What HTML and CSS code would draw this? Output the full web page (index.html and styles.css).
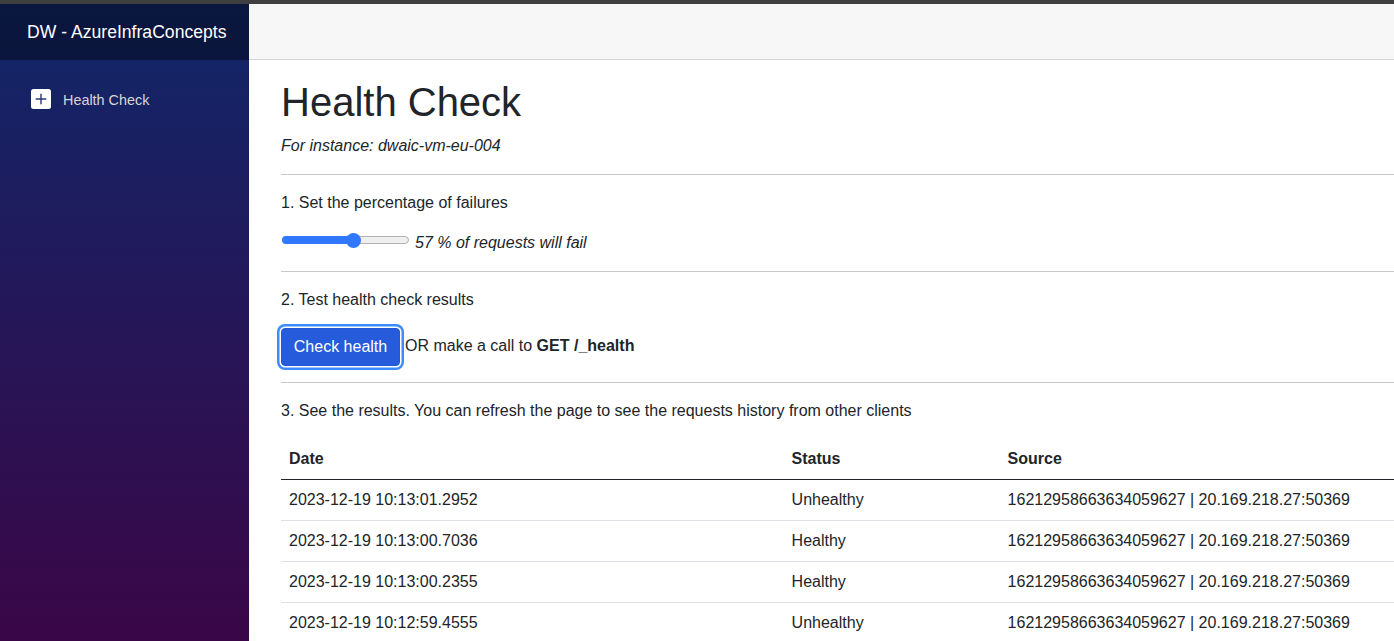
FILE: index.html
```
<!DOCTYPE html>
<html lang="en">
<head>
<meta charset="utf-8">
<title>Health Check</title>
<link rel="stylesheet" href="styles.css">
</head>
<body>
<div class="page">
  <aside class="sidebar">
    <div class="brand">DW - AzureInfraConcepts</div>
    <nav class="nav">
      <a class="nav-link"><svg class="nav-icon" viewBox="0 0 20 20"><rect width="20" height="20" rx="2.5" fill="#fff"/><path d="M10 5.2v9.6M5.2 10h9.6" stroke="#2b3676" stroke-width="1.4" stroke-linecap="round"/></svg>Health Check</a>
    </nav>
  </aside>
  <main class="main">
    <div class="top-row"></div>
    <article class="content">
      <h1>Health Check</h1>
      <p><em>For instance: dwaic-vm-eu-004</em></p>
      <hr>
      <p>1. Set the percentage of failures</p>
      <div class="range-row">
        <div class="range"><div class="range-fill"></div><div class="range-thumb"></div></div>
        <em>57 % of requests will fail</em>
      </div>
      <hr>
      <p>2. Test health check results</p>
      <div class="action-row"><button class="btn">Check health</button><span class="action-hint">OR make a call to <b>GET /_health</b></span></div>
      <hr>
      <p>3. See the results. You can refresh the page to see the requests history from other clients</p>
      <table class="table">
        <colgroup><col class="col-date"><col class="col-status"><col></colgroup>
        <thead><tr><th>Date</th><th>Status</th><th>Source</th></tr></thead>
        <tbody>
          <tr><td>2023-12-19 10:13:01.2952</td><td>Unhealthy</td><td>16212958663634059627 | 20.169.218.27:50369</td></tr>
          <tr><td>2023-12-19 10:13:00.7036</td><td>Healthy</td><td>16212958663634059627 | 20.169.218.27:50369</td></tr>
          <tr><td>2023-12-19 10:13:00.2355</td><td>Healthy</td><td>16212958663634059627 | 20.169.218.27:50369</td></tr>
          <tr><td>2023-12-19 10:12:59.4555</td><td>Unhealthy</td><td>16212958663634059627 | 20.169.218.27:50369</td></tr>
        </tbody>
      </table>
    </article>
  </main>
</div>
</body>
</html>
```
FILE: styles.css
```
* { box-sizing: border-box; }
body {
  margin: 0;
  height: 641px;
  overflow: hidden;
  font: 16px/24px "Liberation Sans", Arial, sans-serif;
  color: #212529;
  background: #fff;
  border-top: 4px solid #3f3f3f;
}
.page { display: flex; height: 637px; }
.sidebar {
  width: 249px;
  flex: none;
  background: linear-gradient(180deg, #102769 0%, #3a0647 100%);
}
.brand {
  height: 56px;
  padding-left: 27px;
  line-height: 56px;
  font-size: 17.6px;
  color: #fff;
  background: rgba(0, 0, 0, .4);
}
.nav { padding: 15px 16px; }
.nav-link {
  display: flex;
  align-items: center;
  height: 50px;
  padding-left: 15px;
  gap: 12px;
  font-size: 14.4px;
  color: #d7d7d7;
}
.nav-icon { width: 20px; height: 20px; margin-bottom: 2px; }
.main { flex: 1; min-width: 0; }
.top-row { height: 56px; background: #f7f7f7; border-bottom: 1px solid #d6d5d5; }
.content { padding: 18px 0 0 32px; }
h1 { margin: 0 0 8px; font-size: 40px; line-height: 48px; font-weight: 400; }
p { margin: 0 0 16px; }
hr { margin: 16px 0; border: 0; border-top: 1px solid #c8c8c9; }
.range-row { display: flex; align-items: center; height: 24px; }
.range {
  position: relative;
  width: 127px;
  height: 8px;
  margin: 0 6px 6px 1px;
  border: 1px solid #b2b2b2;
  border-radius: 4px;
  background: #efefef;
}
.range-fill { width: 71px; height: 8px; margin: -1px; border-radius: 4px; background: #2f78ff; }
.range-thumb {
  position: absolute;
  left: 62.5px;
  top: -4.5px;
  width: 15px;
  height: 15px;
  border-radius: 50%;
  background: #2f78ff;
}
.action-row { display: flex; align-items: center; gap: 5px; height: 38px; }
.action-hint { margin-bottom: 2px; }
.btn {
  width: 119px;
  height: 38px;
  padding: 0;
  border: 1px solid #2158d3;
  border-radius: 4px;
  background: #265cdc;
  color: #fff;
  font: inherit;
  box-shadow: 0 0 0 1.5px #fff, 0 0 0 4px #3e8bff;
}
.table { width: 1140px; border-collapse: separate; border-spacing: 0; table-layout: fixed; }
.col-date { width: 502.6px; }
.col-status { width: 216px; }
th, td { height: 41px; padding: 8px; text-align: left; border-bottom: 1px solid #dee2e6; }
th { border-bottom-color: #212529; }
```
